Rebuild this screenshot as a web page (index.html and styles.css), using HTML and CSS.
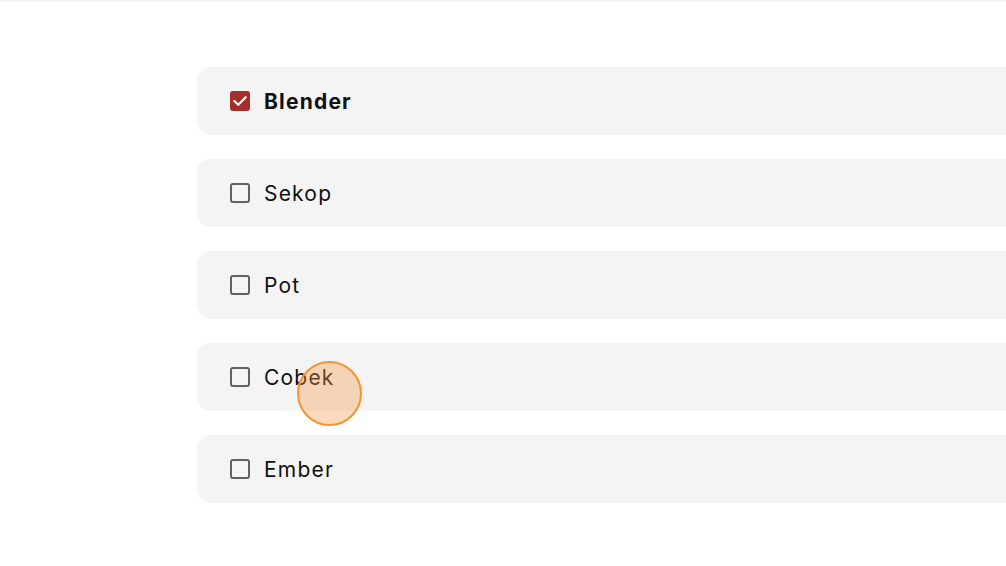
FILE: index.html
```html
<!DOCTYPE html>
<html>
<head>
<meta charset="utf-8">
<link rel="stylesheet" href="styles.css">
</head>
<body>
<div class="topbar"></div>
<ul class="list">
  <li class="item checked">
    <span class="box"><svg viewBox="0 0 20 20" width="20" height="20"><path d="M4.3 10 L8.3 13.8 L15.7 6.3" fill="none" stroke="#fff" stroke-width="2.2" stroke-linecap="round" stroke-linejoin="round"/></svg></span>
    <span class="label">Blender</span>
  </li>
  <li class="item"><span class="box"></span><span class="label">Sekop</span></li>
  <li class="item"><span class="box"></span><span class="label">Pot</span></li>
  <li class="item"><span class="box"></span><span class="label">Cobek</span></li>
  <li class="item"><span class="box"></span><span class="label">Ember</span></li>
</ul>
<div class="cursor"></div>
</body>
</html>
```
FILE: styles.css
```css
html, body {
  margin: 0;
  padding: 0;
  background: #fff;
  width: 1006px;
  height: 566px;
  overflow: hidden;
  font-family: "Inter", "Roboto", sans-serif;
}
.topbar {
  height: 2px;
  background: #f5f5f5;
}
.list {
  list-style: none;
  margin: 65px 0 0 197px;
  padding: 0;
  display: flex;
  flex-direction: column;
  gap: 24px;
}
.item {
  height: 68px;
  width: 820px;
  background: #f4f4f4;
  border-radius: 14px;
  display: flex;
  align-items: center;
  padding-left: 33px;
  box-sizing: border-box;
}
.box {
  width: 20px;
  height: 20px;
  box-sizing: border-box;
  border: 2px solid #616161;
  border-radius: 3px;
  margin-right: 14px;
  display: flex;
  align-items: center;
  justify-content: center;
}
.checked .box {
  border: none;
  background: #a52f2a;
}
.label {
  font-size: 21px;
  color: #111;
  letter-spacing: 1.2px;
}
.checked .label {
  font-weight: 700;
}
.cursor {
  position: absolute;
  left: 297px;
  top: 361px;
  width: 65px;
  height: 65px;
  box-sizing: border-box;
  border: 2px solid #f7922d;
  border-radius: 50%;
  background: rgba(247, 150, 70, 0.35);
}
```
